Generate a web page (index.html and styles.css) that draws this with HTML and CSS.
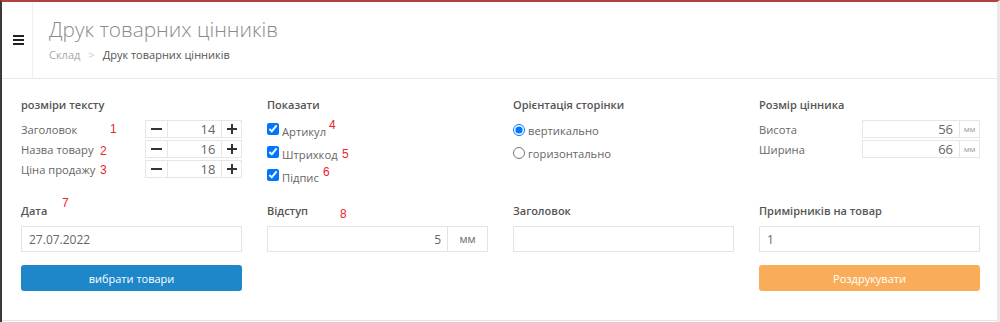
FILE: index.html
```html
<!DOCTYPE html>
<html>
<head>
  <meta charset="UTF-8">
  <title>Друк товарних цінників</title>
  <link rel="stylesheet" href="styles.css">
</head>
<body>
<div class="frame">
  <header class="topbar">
    <button class="menu-toggle">
      <svg width="11" height="10" viewBox="0 0 11 10"><rect y="0" width="11" height="2"/><rect y="4" width="11" height="2"/><rect y="8" width="11" height="2"/></svg>
    </button>
    <div class="page-head">
      <h1 class="page-title">Друк товарних цінників</h1>
      <div class="crumbs">
        <span>Склад</span><span class="crumb-sep">&gt;</span><span class="crumb-current">Друк товарних цінників</span>
      </div>
    </div>
  </header>

  <main class="panel">
    <div class="form-grid">
      <!-- text sizes -->
      <section class="field">
        <h3 class="field-title">розміри тексту</h3>
        <div class="size-rows">
          <div class="size-row">
            <span>Заголовок</span>
            <div class="spinner">
              <span class="spin-btn spin-minus"><svg width="11" height="2"><rect width="11" height="2"/></svg></span>
              <input class="spin-value" value="14">
              <span class="spin-btn spin-plus"><svg width="10" height="10"><rect x="4" width="2" height="10"/><rect y="4" width="10" height="2"/></svg></span>
            </div>
          </div>
          <div class="size-row">
            <span>Назва товару</span>
            <div class="spinner">
              <span class="spin-btn spin-minus"><svg width="11" height="2"><rect width="11" height="2"/></svg></span>
              <input class="spin-value" value="16">
              <span class="spin-btn spin-plus"><svg width="10" height="10"><rect x="4" width="2" height="10"/><rect y="4" width="10" height="2"/></svg></span>
            </div>
          </div>
          <div class="size-row">
            <span>Ціна продажу</span>
            <div class="spinner">
              <span class="spin-btn spin-minus"><svg width="11" height="2"><rect width="11" height="2"/></svg></span>
              <input class="spin-value" value="18">
              <span class="spin-btn spin-plus"><svg width="10" height="10"><rect x="4" width="2" height="10"/><rect y="4" width="10" height="2"/></svg></span>
            </div>
          </div>
        </div>
      </section>

      <!-- show -->
      <section class="field">
        <h3 class="field-title">Показати</h3>
        <div class="check-list">
          <label class="check-row"><input type="checkbox" checked><span>Артикул</span></label>
          <label class="check-row"><input type="checkbox" checked><span>Штрихкод</span></label>
          <label class="check-row"><input type="checkbox" checked><span>Підпис</span></label>
        </div>
      </section>

      <!-- orientation -->
      <section class="field">
        <h3 class="field-title">Орієнтація сторінки</h3>
        <div class="radio-list">
          <label class="radio-row"><input type="radio" name="orient" checked><span>вертикально</span></label>
          <label class="radio-row"><input type="radio" name="orient"><span>горизонтально</span></label>
        </div>
      </section>

      <!-- label size -->
      <section class="field">
        <h3 class="field-title">Розмір цінника</h3>
        <div class="size-rows">
          <div class="size-row">
            <span>Висота</span>
            <div class="dim-box"><input class="dim-value" value="56"><span class="dim-unit">мм</span></div>
          </div>
          <div class="size-row">
            <span>Ширина</span>
            <div class="dim-box"><input class="dim-value" value="66"><span class="dim-unit">мм</span></div>
          </div>
        </div>
      </section>

      <section class="field">
        <h3 class="field-title">Дата</h3>
        <input class="text-input" value="27.07.2022">
        <button class="btn btn-blue">вибрати товари</button>
      </section>

      <section class="field">
        <h3 class="field-title">Відступ</h3>
        <div class="input-group">
          <input class="group-value" value="5">
          <span class="group-addon">мм</span>
        </div>
      </section>

      <section class="field">
        <h3 class="field-title">Заголовок</h3>
        <input class="text-input" value="">
      </section>

      <section class="field">
        <h3 class="field-title">Примірників на товар</h3>
        <input class="text-input" value="1">
        <button class="btn btn-orange">Роздрукувати</button>
      </section>
    </div>
  </main>

  <!-- numbered notes drawn over the form -->
  <span class="mark mark-1">1</span>
  <span class="mark mark-2">2</span>
  <span class="mark mark-3">3</span>
  <span class="mark mark-4">4</span>
  <span class="mark mark-5">5</span>
  <span class="mark mark-6">6</span>
  <span class="mark mark-7">7</span>
  <span class="mark mark-8">8</span>
</div>
</body>
</html>
```

FILE: styles.css
```css
body {
  margin: 0;
  background: #fff;
  font-family: "Open Sans", "DejaVu Sans", sans-serif;
}

.frame {
  position: relative;
  width: 1000px;
  height: 322px;
  box-sizing: border-box;
  border-left: 2px solid #3a3a3a;
  border-top: 2px solid #b0413e;
  border-right: 3px solid #e8e8e8;
}

/* header */
.topbar {
  display: flex;
  height: 76px;
  border-bottom: 1px solid #e8e8e8;
}
.menu-toggle {
  width: 31px;
  padding: 0 0 0 3px;
  border: 0;
  border-right: 1px solid #efefef;
  background: none;
  display: flex;
  align-items: center;
  justify-content: center;
  fill: #222;
}
.page-head {
  padding: 16px 0 0 16px;
}
.page-title {
  margin: 0;
  font-size: 20.8px;
  line-height: 22px;
  font-weight: 300;
  color: #8a8a8a;
}
.crumbs {
  margin-top: 7px;
  font-size: 11px;
  line-height: 16px;
  color: #a8a8a8;
}
.crumb-sep {
  margin: 0 8px;
  color: #cacaca;
}
.crumb-current {
  color: #555;
}

/* form */
.panel {
  height: 242px;
  box-sizing: border-box;
  border-bottom: 1px solid #e3e3e3;
  padding: 18px 17px 0 19px;
}
.form-grid {
  display: grid;
  grid-template-columns: repeat(4, 221px);
  column-gap: 25px;
  row-gap: 17px;
}
.field {
  display: flex;
  flex-direction: column;
}
.field-title {
  margin: 0;
  font-size: 11px;
  line-height: 16px;
  font-weight: 600;
  color: #555;
}

input {
  font-family: inherit;
  margin: 0;
  outline: none;
}

.size-rows {
  margin-top: 7px;
  display: flex;
  flex-direction: column;
  gap: 2px;
}
.size-row {
  display: flex;
  align-items: center;
  justify-content: space-between;
  height: 18px;
  font-size: 11.2px;
  color: #666;
}

.spinner {
  display: flex;
  width: 97px;
  height: 18px;
  box-sizing: border-box;
  border: 1px solid #e6e6e6;
}
.spin-btn {
  display: flex;
  align-items: center;
  justify-content: center;
  fill: #333;
}
.spin-minus {
  width: 22px;
  border-right: 1px solid #e6e6e6;
}
.spin-plus {
  width: 19px;
}
.spin-value {
  width: 54px;
  box-sizing: border-box;
  border: 0;
  border-right: 1px solid #e6e6e6;
  padding: 0 6px 0 0;
  text-align: right;
  font-size: 13px;
  color: #666;
  background: #fff;
}

.dim-box {
  display: flex;
  width: 118px;
  height: 18px;
  box-sizing: border-box;
  border: 1px solid #e6e6e6;
}
.dim-value {
  width: 97px;
  box-sizing: border-box;
  border: 0;
  border-right: 1px solid #e6e6e6;
  padding: 0 6px 0 0;
  text-align: right;
  font-size: 13px;
  color: #666;
}
.dim-unit {
  flex: 1;
  text-align: center;
  font-size: 8px;
  line-height: 16px;
  color: #999;
}

.check-list {
  margin-top: 4px;
  display: flex;
  flex-direction: column;
}
.check-row,
.radio-row {
  display: flex;
  align-items: center;
  height: 23px;
  font-size: 11.2px;
  color: #666;
}
.check-row input,
.radio-row input {
  width: 12px;
  height: 12px;
  margin: 0 3px 0 0;
}
.check-row span {
  margin-top: 5px;
}
.radio-list {
  margin-top: 5px;
  display: flex;
  flex-direction: column;
}
.radio-row span {
  margin-top: 2px;
}

.text-input {
  margin-top: 7px;
  height: 26px;
  box-sizing: border-box;
  border: 1px solid #e4e4e4;
  padding: 0 7px;
  font-size: 12px;
  color: #666;
}
.input-group {
  margin-top: 7px;
  display: flex;
  height: 26px;
  box-sizing: border-box;
  border: 1px solid #e4e4e4;
}
.group-value {
  flex: 1;
  min-width: 0;
  border: 0;
  border-right: 1px solid #e4e4e4;
  padding: 0 6px 0 0;
  text-align: right;
  font-size: 12px;
  color: #666;
}
.group-addon {
  width: 39px;
  text-align: center;
  font-size: 11px;
  line-height: 24px;
  color: #666;
}

.btn {
  margin-top: 13px;
  height: 26px;
  border: 0;
  border-radius: 3px;
  color: #fff;
  font-family: inherit;
  font-size: 11px;
  cursor: pointer;
}
.btn-blue {
  background: #1e87c9;
}
.btn-orange {
  background: #f9ad5b;
}

/* red note numbers */
.mark {
  position: absolute;
  font-family: "Liberation Sans", Arial, sans-serif;
  font-size: 12px;
  line-height: 12px;
  color: #e8262b;
}
.mark-1 { left: 108px; top: 121px; }
.mark-2 { left: 98px; top: 143px; }
.mark-3 { left: 98px; top: 162px; }
.mark-4 { left: 327px; top: 117px; }
.mark-5 { left: 340px; top: 146px; }
.mark-6 { left: 321px; top: 164px; }
.mark-7 { left: 60px; top: 195px; }
.mark-8 { left: 338px; top: 206px; }
```
